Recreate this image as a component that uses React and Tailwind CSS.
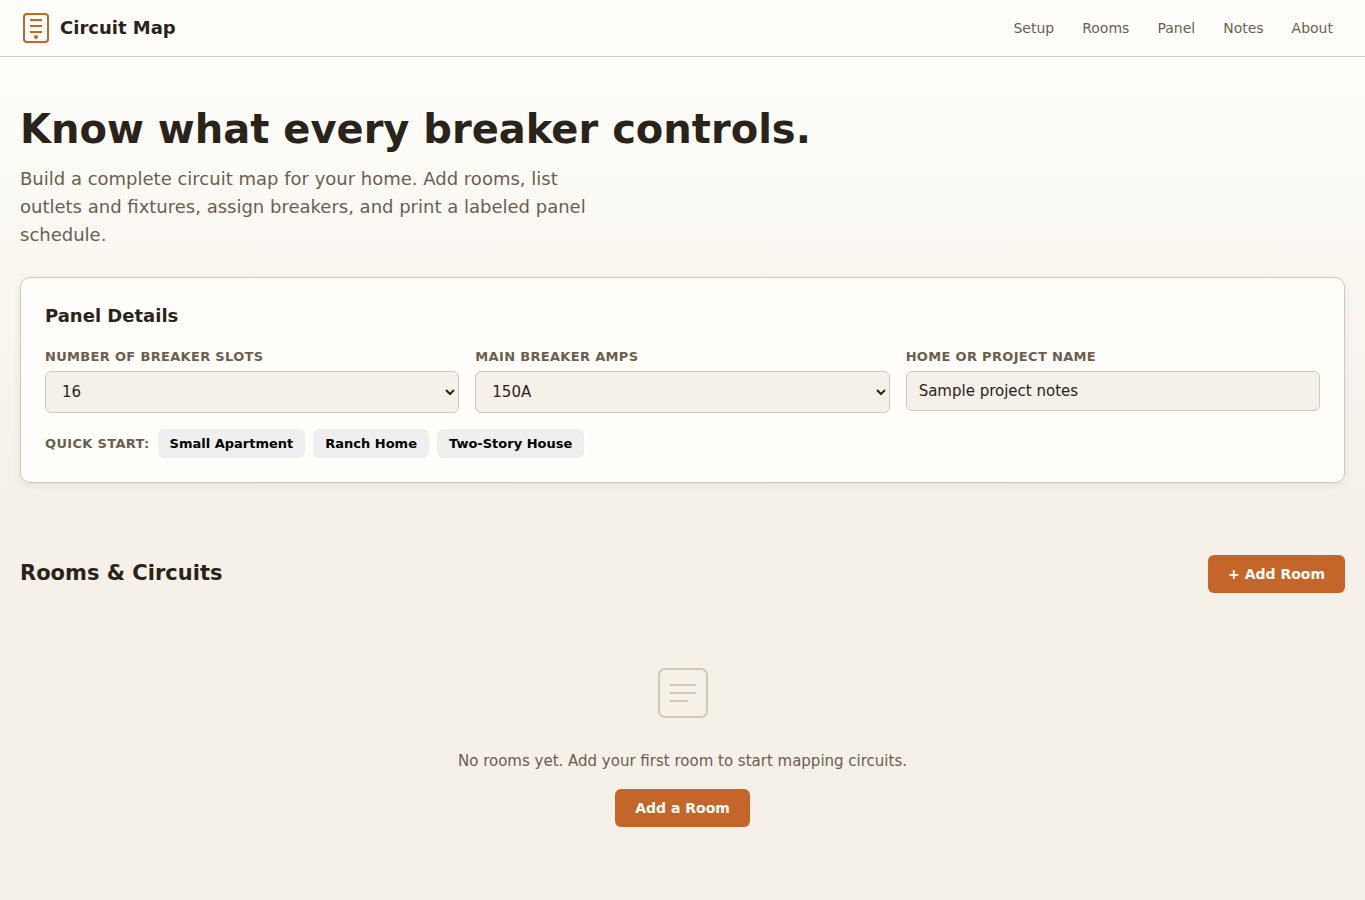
import { useState } from "react"

const navLinks = [
  { label: "Setup", href: "#setup" },
  { label: "Rooms", href: "#rooms" },
  { label: "Panel", href: "#panel" },
  { label: "Notes", href: "#notes" },
  { label: "About", href: "#about" },
]

const slotOptions = ["8", "12", "16", "20", "24", "30", "40"]
const ampOptions = ["60A", "100A", "125A", "150A", "200A"]

const presets = [
  { name: "Small Apartment", slots: "12", amps: "100A" },
  { name: "Ranch Home", slots: "24", amps: "150A" },
  { name: "Two-Story House", slots: "40", amps: "200A" },
]

const labelClass = "text-[13px] leading-[21px] font-semibold uppercase tracking-wide text-[#6b5e4f]"
const fieldClass =
  "w-full rounded-md border border-[#d0c9b8] bg-[#f5f0e8] px-3 text-[15px] leading-5 text-[#2a231a] focus:outline-2 focus:outline-[#c4652a]"

function LogoIcon() {
  return (
    <svg className="w-8 h-8" viewBox="0 0 32 32" fill="none" stroke="#c4652a" strokeWidth="2" aria-hidden="true">
      <rect x="4" y="2" width="24" height="28" rx="3" />
      <path d="M10 8h12M10 14h12M10 20h12" />
      <circle cx="16" cy="25" r="2" fill="#c4652a" stroke="none" />
    </svg>
  )
}

function EmptyIcon() {
  return (
    <svg className="w-16 h-16" viewBox="0 0 64 64" fill="none" stroke="#d0c9b8" strokeWidth="2" aria-hidden="true">
      <rect x="8" y="8" width="48" height="48" rx="6" />
      <path d="M19 24h26M19 32h26M19 40h18" />
    </svg>
  )
}

function PrimaryButton({ children, onClick }) {
  return (
    <button
      onClick={onClick}
      className="cursor-pointer rounded-md bg-[#c4652a] px-5 py-[9px] text-[14px] leading-5 font-semibold text-[#fffefa] hover:bg-[#a85320] transition-colors"
    >
      {children}
    </button>
  )
}

export default function App() {
  const [slots, setSlots] = useState("16")
  const [amps, setAmps] = useState("150A")
  const [name, setName] = useState("Sample project notes")
  const [rooms, setRooms] = useState([])

  const addRoom = () => setRooms([...rooms, `Room ${rooms.length + 1}`])

  const applyPreset = (preset) => {
    setSlots(preset.slots)
    setAmps(preset.amps)
  }

  return (
    <div className="min-h-screen bg-[#f5f0e8] font-['DejaVu_Sans',sans-serif] text-[#2a231a]">
      {/* Header */}
      <header className="flex items-center justify-between border-b border-[#d0c9b8] bg-[#fffefa] px-5 py-3">
        <a href="#top" className="flex items-center gap-2">
          <LogoIcon />
          <span className="text-[18px] leading-7 font-bold">Circuit Map</span>
        </a>
        <nav className="flex gap-1">
          {navLinks.map((link) => (
            <a key={link.label} href={link.href} className="px-3 py-1 text-[14px] leading-6 text-[#6b5e4f] hover:text-[#2a231a]">
              {link.label}
            </a>
          ))}
        </nav>
      </header>

      <main>
        {/* Setup */}
        <section id="setup" className="bg-linear-to-b from-[#fffefa] to-[#f5f0e8] px-5 pt-12 pb-6">
          <h1 className="text-[40px] leading-12 font-bold">Know what every breaker controls.</h1>
          <p className="mt-3 max-w-[570px] text-[18px] leading-7 text-[#6b5e4f]">
            Build a complete circuit map for your home. Add rooms, list outlets and fixtures, assign breakers, and print
            a labeled panel schedule.
          </p>

          <div className="mt-7 rounded-[10px] border border-[#d0c9b8] bg-[#fffefa] p-6 shadow-[0_2px_8px_rgba(42,35,26,0.08)]">
            <h2 className="text-[18px] leading-7 font-bold">Panel Details</h2>
            <div className="mt-4 grid grid-cols-1 items-start gap-4 md:grid-cols-3">
              <div className="flex flex-col gap-1">
                <label htmlFor="slots" className={labelClass}>
                  Number of breaker slots
                </label>
                <select id="slots" value={slots} onChange={(e) => setSlots(e.target.value)} className={`${fieldClass} h-[42px]`}>
                  {slotOptions.map((option) => (
                    <option key={option}>{option}</option>
                  ))}
                </select>
              </div>
              <div className="flex flex-col gap-1">
                <label htmlFor="amps" className={labelClass}>
                  Main breaker amps
                </label>
                <select id="amps" value={amps} onChange={(e) => setAmps(e.target.value)} className={`${fieldClass} h-[42px]`}>
                  {ampOptions.map((option) => (
                    <option key={option}>{option}</option>
                  ))}
                </select>
              </div>
              <div className="flex flex-col gap-1">
                <label htmlFor="project" className={labelClass}>
                  Home or project name
                </label>
                <input id="project" type="text" value={name} onChange={(e) => setName(e.target.value)} className={`${fieldClass} h-10`} />
              </div>
            </div>

            {/* Presets */}
            <div className="mt-4 flex flex-wrap items-center gap-2">
              <span className={labelClass}>Quick start:</span>
              {presets.map((preset) => (
                <button
                  key={preset.name}
                  onClick={() => applyPreset(preset)}
                  className="cursor-pointer rounded-md bg-[#efefef] px-3 py-1 text-[13px] leading-[21px] font-semibold text-black hover:bg-[#e2e2e2]"
                >
                  {preset.name}
                </button>
              ))}
            </div>
          </div>
        </section>

        {/* Rooms */}
        <section id="rooms" className="px-5 py-12">
          <div className="flex items-start justify-between">
            <h2 className="text-[21px] leading-9 font-bold">Rooms &amp; Circuits</h2>
            <PrimaryButton onClick={addRoom}>+ Add Room</PrimaryButton>
          </div>

          {rooms.length === 0 ? (
            <div className="mt-5 flex flex-col items-center px-5 py-12 text-center">
              <EmptyIcon />
              <p className="mt-6 mb-4 text-[15px] leading-6 text-[#6b5e4f]">
                No rooms yet. Add your first room to start mapping circuits.
              </p>
              <PrimaryButton onClick={addRoom}>Add a Room</PrimaryButton>
            </div>
          ) : (
            <ul className="mt-6 space-y-3">
              {rooms.map((room) => (
                <li key={room} className="rounded-md border border-[#d0c9b8] bg-[#fffefa] px-4 py-3 text-[15px]">
                  {room}
                </li>
              ))}
            </ul>
          )}
        </section>
      </main>
    </div>
  )
}
